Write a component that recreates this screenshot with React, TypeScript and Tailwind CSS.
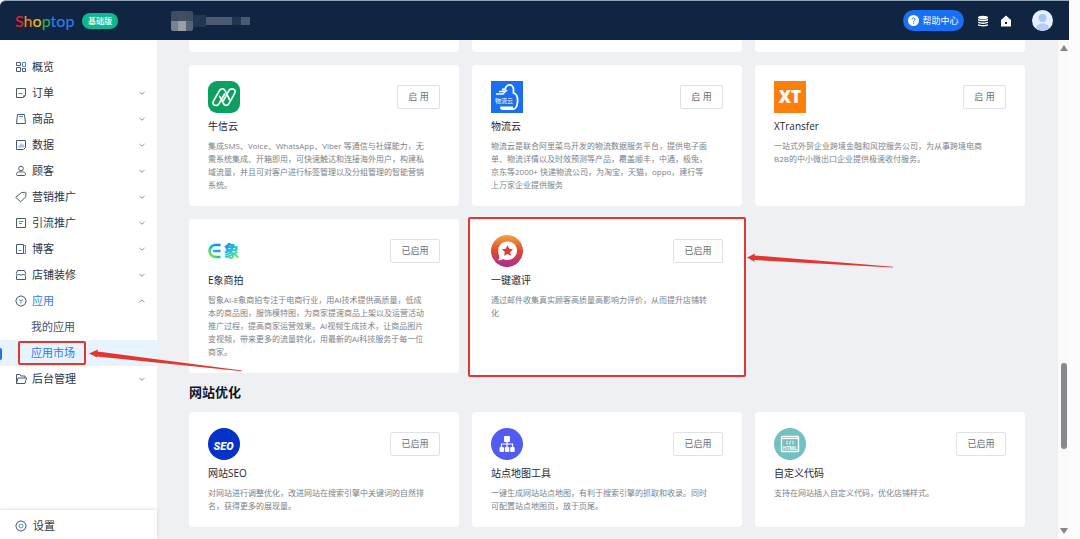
import type { ReactNode } from 'react';

interface MenuItem {
  name: string;
  icon: ReactNode;
  open?: boolean;
  single?: boolean;
}

interface AppInfo {
  name: string;
  desc: string;
  enabled: boolean;
  logo: ReactNode;
  marked?: boolean;
}

const line = 'stroke-[#4a5873]';
const blue = 'stroke-[#4a86e0]';

const menu: MenuItem[] = [
  {
    name: '概览',
    single: true,
    icon: (
      <>
        <path className={line} d="M1.5 1.5h4v3h-4zM1.5 6.5h4v4h-4zM7.5 7.5h3v3h-3z" />
        <path className={blue} d="M7.5 1.5h3v4h-3z" />
      </>
    ),
  },
  {
    name: '订单',
    icon: (
      <>
        <path className={line} d="M1.5 1.5h9v7l-2 2h-7z" />
        <path className={blue} d="M3.5 6.5h4M8.5 10.5v-2h2" />
      </>
    ),
  },
  {
    name: '商品',
    icon: (
      <>
        <path className={line} d="M2.5 1.5h7l1 9h-9z" />
        <path className={blue} d="M4 3.5h4" />
      </>
    ),
  },
  {
    name: '数据',
    icon: (
      <>
        <path className={line} d="M1.5 1.5h9v7l-2 2h-7z" />
        <path className={blue} d="M4 8.5v-2M6 8.5v-4M8 8.5v-3" />
      </>
    ),
  },
  {
    name: '顾客',
    icon: (
      <>
        <circle className={line} cx="6" cy="3.5" r="2.3" />
        <path className={line} d="M1.5 9.5c0-2 1.2-2.6 3-2.6h3c1.8 0 3 .6 3 2.6 0 .7-.3 1-1 1h-7c-.7 0-1-.3-1-1z" />
      </>
    ),
  },
  {
    name: '营销推广',
    icon: (
      <>
        <path className={line} d="M6.5 1.5l4-.2.5.5-.3 4-5 5-5-4.5z" />
        <path className={blue} d="M8.3 3.7h.5" />
      </>
    ),
  },
  {
    name: '引流推广',
    icon: (
      <>
        <path className={line} d="M1.5 1.5h9v9h-9z" />
        <path className={blue} d="M4 4.500h4.500M4 6.500h3" />
      </>
    ),
  },
  {
    name: '博客',
    icon: (
      <>
        <path className={line} d="M1.5 1.5h7v9h-7z" />
        <path className={blue} d="M3.5 7.5h3M9 2.500h1.500v8H8.500" />
      </>
    ),
  },
  {
    name: '店铺装修',
    icon: (
      <>
        <path className={line} d="M2.5 1.5h7l1.200 3c0 2-2.400 2-2.700.5-.3 1.500-3.700 1.500-4 0-.3 1.500-2.700 1.500-2.700-.5z" />
        <path className={line} d="M1.5 6.5v4h9v-4" />
      </>
    ),
  },
  {
    name: '应用',
    open: true,
    icon: (
      <>
        <path className={line} d="M6 .8l3.800 1.700 1.400 3.500-1.400 3.500L6 11.200 2.200 9.500.8 6l1.400-3.500z" />
        <path className={blue} d="M4 4.500l2 1.500 2-1.500M6 6v2.500" />
      </>
    ),
  },
];

const backOffice: MenuItem = {
  name: '后台管理',
  icon: (
    <path className={line} d="M1.500 10.500v-9h3.500l1 1.500h4v2M1.500 10.500l1.500-5.500h8.500l-1.500 5.500z" />
  ),
};

const tradeApps: AppInfo[] = [
  {
    name: '牛信云',
    enabled: false,
    desc: '集成SMS、Voice、WhatsApp、Viber 等通信与社媒能力，无\n需系统集成、开箱即用，可快速触达和连接海外用户，构建私\n域流量，并且可对客户进行标签管理以及分组管理的智能营销\n系统。',
    logo: (
      <>
        <rect width="32" height="32" rx="9" fill="#0aa05f" />
        <g fill="none" stroke="#fff" strokeWidth="1.700" strokeLinejoin="round" strokeLinecap="round">
          <path d="M8.500 24.500c-3 0-4.500-2-3-4.500l6-10.500c1.200-2.300 4.400-2.300 5.500 0l4.500 9" />
          <path d="M23.500 7.800c3.500 0 4.500 2 3.200 4.500l-6 10.500c-1.200 2.200-4 2-5 0l-4-7.500" />
          <path d="M8.500 24.500c1.200 0 2-.7 2.600-1.800l5.500-9.700M23.500 7.800c-1.200 0-2 .7-2.600 1.800l-5.300 9.700" />
        </g>
      </>
    ),
  },
  {
    name: '物流云',
    enabled: false,
    desc: '物流云是联合阿里菜鸟开发的物流数据服务平台，提供电子面\n单、物流详情以及时效预测等产品，覆盖顺丰，中通，极兔，\n京东等2000+ 快递物流公司，为淘宝，天猫，oppo，建行等\n上万家企业提供服务',
    logo: (
      <>
        <rect width="32" height="32" fill="#1a70ee" />
        <path d="M11 8.500h3c1.500-6 7.500-6 8.500-.5v4c3.500 1 4.500 3.500 4 9-.3 4-1 6-3.500 7H11c-1-.3-1-1-1-1.500h12" fill="none" stroke="#fff" strokeWidth="1.800" />
        <path d="M5 13h7l4-4M8 10.500h6" fill="none" stroke="#fff" strokeWidth="1.300" />
        <text x="4" y="22" fontSize="6" fill="#fff">物流云</text>
      </>
    ),
  },
  {
    name: 'XTransfer',
    enabled: false,
    desc: '一站式外贸企业跨境金融和风控服务公司，为从事跨境电商\nB2B的中小微出口企业提供极速收付服务。',
    logo: (
      <>
        <rect width="32" height="32" fill="#fc7f0c" />
        <text x="16" y="22" fontSize="17" fontWeight="800" textAnchor="middle" fill="#fff">XT</text>
      </>
    ),
  },
  {
    name: 'E象商拍',
    enabled: true,
    desc: '智象AI-E象商拍专注于电商行业，用AI技术提供高质量，低成\n本的商品图，服饰模特图，为商家提速商品上架以及运营活动\n推广过程，提高商家运营效果。AI视频生成技术，让商品图片\n变视频，带来更多的流量转化，用最新的AI科技服务于每一位\n商家。',
    logo: (
      <>
        <defs>
          <linearGradient id="eLeft" x1="0" y1="1" x2="1" y2="0">
            <stop offset="0" stopColor="#b5e61d" />
            <stop offset="0.4" stopColor="#16c7b8" />
            <stop offset="1" stopColor="#1b7cf0" />
          </linearGradient>
          <linearGradient id="eRight" x1="0" y1="0" x2="0.6" y2="1">
            <stop offset="0" stopColor="#1273ee" />
            <stop offset="0.6" stopColor="#17c8dc" />
            <stop offset="1" stopColor="#a8e63a" />
          </linearGradient>
        </defs>
        <path d="M12.500 10H7.500a5.800 5.800 0 000 12h5M5 16h7.500" fill="none" stroke="url(#eLeft)" strokeWidth="2.600" />
        <text x="15.500" y="22" fontSize="16" fontWeight="900" fill="url(#eRight)">象</text>
      </>
    ),
  },
  {
    name: '一键邀评',
    enabled: true,
    marked: true,
    desc: '通过邮件收集真实顾客高质量高影响力评价，从而提升店铺转\n化',
    logo: (
      <>
        <defs>
          <linearGradient id="review" x1="0" y1="0" x2="0" y2="1">
            <stop offset="0" stopColor="#f3a33c" />
            <stop offset="0.5" stopColor="#e0492f" />
            <stop offset="1" stopColor="#a82a94" />
          </linearGradient>
        </defs>
        <circle cx="16" cy="16" r="16" fill="url(#review)" />
        <path d="M16.500 6.500c5.500 0 9.500 4 9.500 9s-4 9.500-9.500 9.500c-1.800 0-3-.3-4.500-1.100-1.200 1.100-3 1.600-5 1.400 1.200-1.300 1.600-2.600 1.200-4.200C5.300 13.500 9 6.500 16.500 6.500z" fill="#fff" />
        <path d="M16.500 10.300l1.700 3.500 3.800.5-2.800 2.700.7 3.800-3.400-1.800-3.400 1.800.7-3.800-2.800-2.700 3.800-.5z" fill="#e23a30" />
      </>
    ),
  },
];

const siteApps: AppInfo[] = [
  {
    name: '网站SEO',
    enabled: true,
    desc: '对网站进行调整优化，改进网站在搜索引擎中关键词的自然排\n名，获得更多的展现量。',
    logo: (
      <>
        <circle cx="16" cy="16" r="16" fill="#0532c8" />
        <text x="15.500" y="21.500" fontSize="11" fontWeight="900" fontStyle="italic" textAnchor="middle" fill="#fff" fontFamily="Roboto, sans-serif">
          SEO
        </text>
      </>
    ),
  },
  {
    name: '站点地图工具',
    enabled: true,
    desc: '一键生成网站站点地图，有利于搜索引擎的抓取和收录。同时\n可配置站点地图页，放于页尾。',
    logo: (
      <>
        <circle cx="16" cy="16" r="16" fill="#525cf0" />
        <path d="M16 13v7M10.500 20v-4h11v4" fill="none" stroke="#fff" strokeWidth="1.200" />
        <g fill="#fff">
          <rect x="13" y="8" width="6" height="6" rx="1" />
          <rect x="8.500" y="19" width="4.500" height="5" rx="1" />
          <rect x="13.800" y="19" width="4.500" height="5" rx="1" />
          <rect x="19.200" y="19" width="4.500" height="5" rx="1" />
        </g>
      </>
    ),
  },
  {
    name: '自定义代码',
    enabled: true,
    desc: '支持在网站插入自定义代码，优化店铺样式。',
    logo: (
      <>
        <circle cx="16" cy="16" r="16" fill="#74bfc1" />
        <rect x="7.500" y="8.500" width="17" height="15" rx="1" fill="none" stroke="#fff" strokeWidth="1.400" />
        <path d="M7.500 10.500h17" stroke="#fff" strokeWidth="1.200" />
        <path d="M14 12.800l-2 1.700 2 1.700M18 12.800l2 1.700-2 1.700M16.700 12.500l-1.400 4" fill="none" stroke="#fff" strokeWidth="0.900" />
        <text x="16" y="22" fontSize="5" fontWeight="700" textAnchor="middle" fill="#fff">HTML</text>
      </>
    ),
  },
];

const MenuIcon = ({ children }: { children: ReactNode }) => (
  <svg viewBox="0 0 12 12" className="h-3 w-3 shrink-0" fill="none" strokeWidth="1" strokeLinejoin="round">
    {children}
  </svg>
);

const MenuRow = ({ item }: { item: MenuItem }) => (
  <a href="#" className="flex h-[26px] items-center gap-[5px] pr-[11px] pl-[15px]">
    <MenuIcon>{item.icon}</MenuIcon>
    <span className={item.open ? 'flex-1 text-[#2f7be8]' : 'flex-1'}>{item.name}</span>
    {!item.single && (
      <svg viewBox="0 0 8 8" className="h-2 w-2" fill="none" stroke="#8d929b">
        <path d={item.open ? 'M1.5 5.2L4 3l2.5 2.2' : 'M1.5 3L4 5.2 6.5 3'} />
      </svg>
    )}
  </a>
);

const Header = () => (
  <header className="flex h-10 shrink-0 items-center rounded-tl-md border-t border-[#8fa6b8] bg-[#102542] pr-4 pl-[15px] text-white">
    <a href="#" className="w-[59px] font-['Lato','Open_Sans',sans-serif] text-[16px] leading-5 font-medium">
      <span className="text-[#ee2026]">S</span>
      <span className="text-[#f08a1d]">h</span>
      <span className="text-[#f2b705]">o</span>
      <span className="text-[#2fae4a]">p</span>
      <span className="text-[#2a7df0]">top</span>
    </a>
    <span className="ml-2 flex h-4 w-9 items-center justify-center rounded-full bg-[#0fb893] text-[8px] font-medium">基础版</span>

    {/* Store name, masked */}
    <div className="ml-[53px] flex items-center">
      <div className="grid h-5 w-[22px] grid-cols-3 grid-rows-2 overflow-hidden rounded-xs">
        <i className="bg-[#3d4d63]" />
        <i className="bg-[#434f60]" />
        <i className="bg-[#3d4d63]" />
        <i className="bg-[#77818f]" />
        <i className="bg-[#9a9fa6]" />
        <i className="bg-[#56647a]" />
      </div>
      <i className="h-3 w-[13px] bg-[#22364f]" />
      <i className="h-2 w-[26px] bg-[#4b5a70]" />
      <i className="h-2 w-[9px] bg-[#22364f]" />
      <i className="h-2 w-[9px] bg-[#4b5a70]" />
    </div>

    <button className="ml-auto flex h-[21px] w-[61px] items-center justify-center gap-[3px] rounded-full bg-[#1870f5] text-[9px]">
      <svg viewBox="0 0 11 11" className="h-[11px] w-[11px]">
        <circle cx="5.500" cy="5.500" r="5.500" fill="#fff" />
        <path d="M4 4.500c0-2 3-2 3 0 0 1-1.500 1-1.500 2.200M5.500 7.700v1" fill="none" stroke="#1870f5" />
      </svg>
      帮助中心
    </button>
    <button aria-label="数据" className="ml-[13px]">
      <svg viewBox="0 0 12 12" className="h-3 w-3" fill="#fff">
        <ellipse cx="6" cy="2.500" rx="5" ry="1.800" />
        <path d="M1 3.800c1.500 1.400 8.500 1.400 10 0v1.400c-1.500 1.500-8.500 1.500-10 0zM1 6.400c1.500 1.400 8.500 1.400 10 0v1.400c-1.500 1.500-8.500 1.500-10 0zM1 9c1.500 1.400 8.500 1.400 10 0v1.200c-1.500 1.600-8.500 1.600-10 0z" />
      </svg>
    </button>
    <button aria-label="首页" className="ml-[11px]">
      <svg viewBox="0 0 12 12" className="h-3 w-3">
        <path d="M6 .5l5 4.500v6.500H1V5z" fill="#fff" />
        <path d="M5 7h2v2H5z" fill="#102542" />
      </svg>
    </button>
    <button aria-label="账户" className="ml-5">
      <svg viewBox="0 0 21 21" className="h-[21px] w-[21px]">
        <defs>
          <clipPath id="avatar">
            <circle cx="10.500" cy="10.500" r="10.500" />
          </clipPath>
        </defs>
        <g clipPath="url(#avatar)">
          <rect width="21" height="21" fill="#e6efff" />
          <circle cx="10.500" cy="8" r="4" fill="#a9c5f7" />
          <path d="M4 18c0-6 13-6 13 0v1c-3 2.500-10 2.500-13 0z" fill="#b5cdf8" />
        </g>
      </svg>
    </button>
  </header>
);

const Sidebar = () => (
  <aside className="z-10 flex w-[157px] shrink-0 flex-col bg-white text-[11px] text-[#2b3445]">
    <nav className="flex-1 pt-[14px]">
      {menu.map((item) => (
        <MenuRow key={item.name} item={item} />
      ))}
      <a href="#" className="flex h-[26px] items-center pl-[31px] text-[#4b5260]">
        我的应用
      </a>
      <a href="#" className="relative flex h-[26px] items-center bg-[#e7f3fe] pl-[31px] text-[#2f7be8]">
        应用市场
        <i className="absolute top-2 left-0 h-3 w-0.5 rounded-r bg-[#2270ea]" />
        <span className="absolute inset-y-px left-[18px] w-[68px] rounded-xs border-2 border-[#e2362f]" />
        <svg viewBox="0 0 154 24" className="absolute top-2 left-[89px] h-6 w-[154px]" fill="#e2362f">
          <path d="M0 5.500L9 1.500l-.5 2L153 22.500v.8L8 8.500l.2 1z" />
        </svg>
      </a>
      <MenuRow item={backOffice} />
    </nav>
    <a href="#" className="flex h-[29px] items-center gap-[6px] pt-[3px] pl-[15px] shadow-[0_-1px_3px_rgba(0,0,0,0.12)]">
      <MenuIcon>
        <path className={line} d="M6 .8l3.800 1.700 1.400 3.500-1.400 3.500L6 11.200 2.200 9.500.8 6l1.400-3.500z" />
        <circle className={blue} cx="6" cy="6" r="2" />
      </MenuIcon>
      设置
    </a>
  </aside>
);

const AppCard = ({ app }: { app: AppInfo }) => (
  <article className="relative isolate rounded bg-white px-[19px] pt-4 pb-[15px]">
    {app.marked && (
      <>
        <span className="absolute -inset-x-1 -top-0.5 -bottom-1 -z-10 rounded-xs border-2 border-[#e2362f] bg-white" />
        <svg viewBox="0 0 146 18" className="absolute top-8 left-full ml-[5px] h-[18px] w-[146px]" fill="#e2362f">
          <path d="M0 6.500L8 2.500l-.5 2L146 15.700v.8L7 9l1 2z" />
        </svg>
      </>
    )}
    <div className="flex items-center justify-between">
      <svg viewBox="0 0 32 32" className="h-8 w-8">
        {app.logo}
      </svg>
      <button
        className={`h-6 rounded-xs border border-[#dfe1e6] text-[9px] text-[#666b75] ${app.enabled ? 'w-[50px]' : 'w-[43px]'}`}
      >
        {app.enabled ? '已启用' : '启 用'}
      </button>
    </div>
    <h3 className="mt-[5px] text-[10px] leading-4 text-[#1f2633]">{app.name}</h3>
    <p className="mt-[5px] text-[8px] leading-[13px] whitespace-pre text-[#7b7f88]">{app.desc}</p>
  </article>
);

export default function App() {
  return (
    <div className="flex h-screen overflow-hidden bg-[#fcfcfd] font-['Open_Sans','Noto_Sans_CJK_SC',sans-serif]">
      <div className="mr-[11px] flex min-w-0 flex-1 flex-col">
        <Header />
        <div className="flex min-h-0 flex-1">
          <Sidebar />
          <main className="min-w-0 flex-1 overflow-hidden bg-[#eff0f4] pr-[33px] pl-8">
            {/* End of the previous row */}
            <div className="mb-[13px] grid grid-cols-3 gap-[13px]">
              <div className="h-3 rounded-b bg-white" />
              <div className="h-3 rounded-b bg-white" />
              <div className="h-3 rounded-b bg-white" />
            </div>
            <div className="grid grid-cols-3 gap-[13px]">
              {tradeApps.map((app) => (
                <AppCard key={app.name} app={app} />
              ))}
            </div>
            <h2 className="my-[9px] text-[13px] leading-[21px] font-bold text-[#10151f]">网站优化</h2>
            <div className="grid grid-cols-3 gap-[13px]">
              {siteApps.map((app) => (
                <AppCard key={app.name} app={app} />
              ))}
            </div>
          </main>

          {/* Scrollbar */}
          <div className="flex w-[11px] shrink-0 flex-col items-center bg-[#fafafb] py-[5px]">
            <svg viewBox="0 0 8 6" className="h-[6px] w-2" fill="#85878b">
              <path d="M4 0l4 6H0z" />
            </svg>
            <div className="flex flex-1 flex-col items-center">
              <i className="flex-[312]" />
              <i className="w-[6px] flex-[86] rounded-full bg-[#88898c]" />
              <i className="flex-[79]" />
            </div>
            <svg viewBox="0 0 8 6" className="h-[6px] w-2" fill="#85878b">
              <path d="M0 0h8L4 6z" />
            </svg>
          </div>
        </div>
      </div>
    </div>
  );
}
